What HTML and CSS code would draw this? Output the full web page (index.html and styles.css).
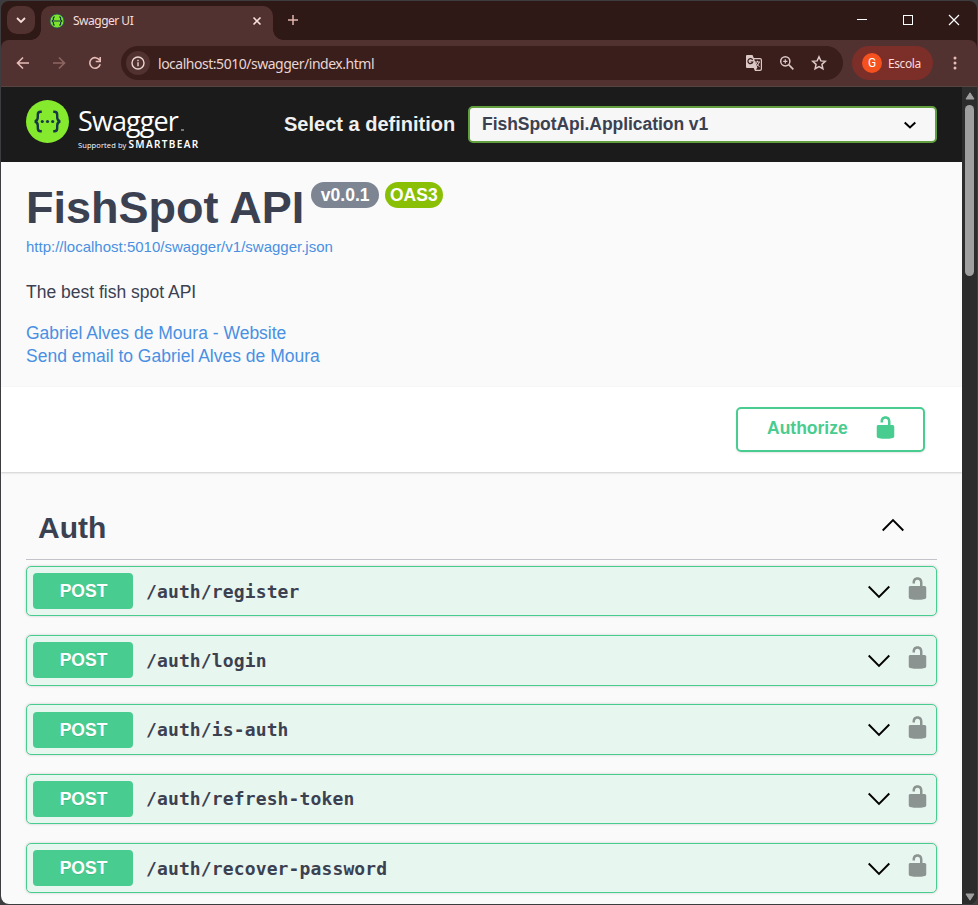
FILE: index.html
```html
<!DOCTYPE html>
<html lang="en">
<head>
<meta charset="utf-8">
<title>Swagger UI</title>
<link rel="stylesheet" href="styles.css">
</head>
<body>
<svg class="defs" width="0" height="0">
  <symbol id="unlock" viewBox="0 0 20 20"><path d="M15.8 8H14V5.6C14 2.703 12.665 1 10 1 7.334 1 6 2.703 6 5.6V6h2v-.801C8 3.754 8.797 3 10 3c1.203 0 2 .754 2 2.199V8H4c-.553 0-1 .646-1 1.199V17c0 .549.428 1.139.951 1.307l1.197.387C5.672 18.861 6.55 19 7.1 19h5.8c.549 0 1.428-.139 1.951-.307l1.196-.387c.524-.167.953-.757.953-1.306V9.199C17 8.646 16.352 8 15.8 8z"/></symbol>
  <symbol id="chev" viewBox="0 0 24 14"><path d="M1.7 1.5 12 11.9 22.3 1.5" fill="none" stroke="#000" stroke-width="1.9"/></symbol>
</svg>
<div class="window">
  <header class="tabs">
    <button class="tabsearch"><svg width="10" height="7"><path d="M1 1l4 4 4-4" fill="none" stroke="#f5dedb" stroke-width="1.8"/></svg></button>
    <div class="tab">
      <svg width="16" height="16" viewBox="0 0 16 16"><circle cx="8" cy="8" r="7.1" fill="#7ee52c" stroke="#284b50" stroke-width="1"/><path d="M6 4H5Q4.4 4 4.4 5v1.7L3.2 8l1.2 1.3V11q0 1 .6 1h1M10 4h1q.6 0 .6 1v1.7L12.8 8l-1.2 1.3V11q0 1-.6 1h-1M5 8h6" fill="none" stroke="#173647" stroke-width="1.2"/></svg>
      <span class="tabtitle">Swagger UI</span>
      <svg class="close" width="10" height="10"><path d="M1.5 1.5l7 7M8.500 1.500l-7 7" stroke="#f5dedb" stroke-width="1.6"/></svg>
    </div>
    <svg class="newtab" width="12" height="12"><path d="M6 1v10M1 6h10" stroke="#e3b5ae" stroke-width="1.5"/></svg>
    <div class="controls">
      <svg width="12" height="12"><path d="M1 5.500h10" stroke="#fff"/></svg>
      <svg width="12" height="12"><rect x="1.500" y="1.500" width="9" height="9" fill="none" stroke="#fff"/></svg>
      <svg width="12" height="12"><path d="M1 1l10 10M11 1L1 11" stroke="#fff" stroke-width="1.2"/></svg>
    </div>
  </header>
  <nav class="toolbar">
    <div class="navicons">
      <svg width="14" height="14"><path d="M13 7H2M7 1.500L1.500 7 7 12.500" fill="none" stroke="#e8bdb7" stroke-width="1.6"/></svg>
      <svg width="14" height="14"><path d="M1 7h11M7 1.500L12.500 7 7 12.500" fill="none" stroke="#8d6762" stroke-width="1.6"/></svg>
      <svg width="14" height="14"><path d="M11.600 4.200A5.300 5.300 0 1 0 12.200 8.300M12.200 1v4.500H7.700" fill="none" stroke="#e8bdb7" stroke-width="1.6"/></svg>
    </div>
    <div class="address">
      <span class="info"><svg width="14" height="14"><circle cx="7" cy="7" r="6" fill="none" stroke="#e9d5d2" stroke-width="1.4"/><path d="M7 6.200V10.200M7 3.700v1.500" stroke="#e9d5d2" stroke-width="1.4"/></svg></span>
      <span class="url">localhost:5010/swagger/index.html</span>
      <span class="actions">
        <svg width="18" height="18" viewBox="0 0 18 18"><path d="M2 1h5.500l1.300 3H15q2 0 2 2v9q0 2-2 2H10l-1.300-3H2q-1 0-1-1V2q0-1 1-1z" fill="#dcc8c6"/><path d="M9.200 5.200h5.800q.8 0 .8.8v9q0 .8-.8.8h-4l1.400-2.300z" fill="#3a1e1b"/><path d="M7.600 5.900A2.500 2.500 0 1 0 7.800 8H5.600" fill="none" stroke="#3a1e1b" stroke-width="1.200"/><path d="M10 8h5M12.500 6.700V8M11 8.500q1 2.800 3.700 4.300M14.300 8q-.8 3-3.300 4.800" fill="none" stroke="#dcc8c6"/></svg>
        <svg width="16" height="16"><circle cx="6.300" cy="6.300" r="4.600" fill="none" stroke="#dcc8c6" stroke-width="1.500"/><path d="M9.700 9.700l4.600 4.600" stroke="#dcc8c6" stroke-width="1.700"/><path d="M6.300 4.200v4.200M4.200 6.300h4.200" stroke="#dcc8c6" stroke-width="1.200"/></svg>
        <svg width="16" height="16"><path d="M8 1.800l1.850 4.100 4.450.45-3.350 3 .95 4.400L8 11.500l-3.900 2.250.95-4.400-3.350-3 4.450-.45z" fill="none" stroke="#dcc8c6" stroke-width="1.500"/></svg>
      </span>
    </div>
    <div class="profile"><span class="avatar">G</span><span class="name">Escola</span></div>
    <svg class="more" width="4" height="16" fill="#e8bdb7"><circle cx="2" cy="3" r="1.500"/><circle cx="2" cy="8" r="1.500"/><circle cx="2" cy="13" r="1.500"/></svg>
  </nav>
  <div class="view">
    <main class="page">
      <div class="topbar">
        <div class="logo">
          <svg width="43" height="43" viewBox="0 0 43 43"><circle cx="21.500" cy="21.500" r="21.500" fill="#85ea2d"/><path d="M15.800 11.700h-1.300q-2.700 0-2.700 3v2.600q0 3.500-3 4.200 3 .7 3 4.200v2.600q0 3 2.700 3h1.300M27.200 11.700h1.300q2.700 0 2.700 3v2.600q0 3.500 3 4.200-3 .7-3 4.200v2.600q0 3-2.700 3h-1.300" fill="none" stroke="#173647" stroke-width="2.400"/><g fill="#173647"><circle cx="16.300" cy="21.500" r="1.550"/><circle cx="21.500" cy="21.500" r="1.550"/><circle cx="26.700" cy="21.500" r="1.550"/></g></svg>
          <div class="words"><span class="brand">Swagger<i></i></span><span class="support">Supported by <b>SMARTBEAR</b></span></div>
        </div>
        <label class="deflabel">Select a definition</label>
        <div class="select"><span>FishSpotApi.Application v1</span><svg width="14" height="9"><path d="M1.700 1.500L7 6.500l5.300-5" fill="none" stroke="#000" stroke-width="2"/></svg></div>
      </div>
      <section class="about">
        <div class="titleline"><h1>FishSpot API</h1><span class="badge">v0.0.1</span><span class="badge oas">OAS3</span></div>
        <a class="json">http://localhost:5010/swagger/v1/swagger.json</a>
        <p>The best fish spot API</p>
        <a>Gabriel Alves de Moura - Website</a>
        <a>Send email to Gabriel Alves de Moura</a>
      </section>
      <section class="scheme"><button class="authorize"><span>Authorize</span><svg width="25" height="25"><use href="#unlock"/></svg></button></section>
      <section class="ops">
        <div class="tag"><h2>Auth</h2><svg class="up" width="24" height="14"><use href="#chev"/></svg></div>
        <div class="op"><span class="method">POST</span><span class="path">/auth/register</span><svg class="chev" width="24" height="14"><use href="#chev"/></svg><svg class="lock" width="25" height="25"><use href="#unlock"/></svg></div>
        <div class="op"><span class="method">POST</span><span class="path">/auth/login</span><svg class="chev" width="24" height="14"><use href="#chev"/></svg><svg class="lock" width="25" height="25"><use href="#unlock"/></svg></div>
        <div class="op"><span class="method">POST</span><span class="path">/auth/is-auth</span><svg class="chev" width="24" height="14"><use href="#chev"/></svg><svg class="lock" width="25" height="25"><use href="#unlock"/></svg></div>
        <div class="op"><span class="method">POST</span><span class="path">/auth/refresh-token</span><svg class="chev" width="24" height="14"><use href="#chev"/></svg><svg class="lock" width="25" height="25"><use href="#unlock"/></svg></div>
        <div class="op"><span class="method">POST</span><span class="path">/auth/recover-password</span><svg class="chev" width="24" height="14"><use href="#chev"/></svg><svg class="lock" width="25" height="25"><use href="#unlock"/></svg></div>
      </section>
    </main>
    <aside class="scroll">
      <svg width="10" height="8"><path d="M5 .8L9 7H1z" fill="#9f9f9f" stroke="#9f9f9f" stroke-linejoin="round"/></svg>
      <div class="thumb"></div>
      <svg class="down" width="10" height="8"><path d="M5 7.200L9 1H1z" fill="#9f9f9f" stroke="#9f9f9f" stroke-linejoin="round"/></svg>
    </aside>
  </div>
</div>
</body>
</html>
```
FILE: styles.css
```css
* { box-sizing: border-box; }
body { margin: 0; width: 978px; height: 905px; overflow: hidden; background: #3d3d3f; font-family: "Liberation Sans", Arial, sans-serif; color: #3b4151; }
svg { display: block; flex: none; }
.defs { position: absolute; }
button { padding: 0; border: 0; font: inherit; }
.window { margin: 1px 2px 1px 1px; width: 976px; height: 903px; border-radius: 8px; overflow: hidden; background: #2f1916; display: flex; flex-direction: column; }

.tabs { height: 39px; flex: none; display: flex; align-items: flex-start; padding: 5px 0 0 6px; color: #f5dedb; font-family: "Noto Sans", sans-serif; }
.tabsearch { width: 28px; height: 28px; border-radius: 10px; background: #523230; display: flex; align-items: center; justify-content: center; }
.tab { position: relative; width: 232px; height: 34px; margin-left: 6px; border-radius: 10px 10px 0 0; background: #523230; display: flex; align-items: center; padding: 0 11px 5px 8px; }
.tab::before, .tab::after { content: ""; position: absolute; bottom: 0; width: 10px; height: 10px; }
.tab::before { left: -10px; background: radial-gradient(circle at 0 0, transparent 9.5px, #523230 10px); }
.tab::after { right: -10px; background: radial-gradient(circle at 100% 0, transparent 9.5px, #523230 10px); }
.tabtitle { flex: 1; margin-left: 8px; font-size: 12px; letter-spacing: -.5px; }
.newtab { margin: 8px 0 0 14px; }
.controls { margin-left: auto; display: flex; gap: 34px; padding: 8px 17px 0 0; }

.toolbar { height: 46px; flex: none; display: flex; align-items: center; background: #523230; padding: 0 20px 0 15px; border-radius: 8px 8px 0 0; font-family: "Noto Sans", sans-serif; }
.navicons { display: flex; gap: 22px; margin-right: 19px; }
.address { width: 722px; height: 34px; border-radius: 17px; background: #3a1e1b; display: flex; align-items: center; padding: 0 16px 0 5px; }
.info { width: 24px; height: 24px; border-radius: 50%; background: #523230; display: flex; align-items: center; justify-content: center; }
.url { margin-left: 8px; font-size: 14px; letter-spacing: -.48px; color: #e9d5d2; }
.actions { margin-left: auto; display: flex; align-items: center; gap: 16px; }
.profile { width: 81px; height: 34px; border-radius: 17px; margin-left: 9px; background: #7c2e29; display: flex; align-items: center; padding-left: 10px; color: #ffdad5; font-size: 12px; }
.avatar { width: 20px; height: 20px; border-radius: 50%; background: #f4511e; color: #fff; display: flex; align-items: center; justify-content: center; font: 12px Roboto, sans-serif; }
.name { margin-left: 6px; letter-spacing: -.4px; }
.more { margin-left: auto; }

.view { flex: 1; min-height: 0; display: flex; border-top: 1px solid #554440; }
.page { width: 961px; background: #fafafa; overflow: hidden; }
.topbar { height: 75px; background: #1b1b1b; display: flex; align-items: center; padding: 0 25px; }
.logo { display: flex; width: 258px; align-items: flex-start; height: 49px; }
.words { margin-left: 9px; display: flex; flex-direction: column; color: #fff; font-family: "Open Sans", sans-serif; white-space: nowrap; }
.brand { font-size: 27px; line-height: 32px; height: 38px; padding-top: 5px; letter-spacing: -.9px; }
.brand i { display: inline-block; width: 3px; height: 2px; margin-left: 3px; background: #777; }
.support { font-size: 7.5px; line-height: 12px; letter-spacing: .1px; }
.support b { font-family: "Noto Sans", sans-serif; font-weight: 600; font-size: 10px; letter-spacing: 1.35px; }
.deflabel { color: #f0f0f0; font-size: 20px; font-weight: 700; white-space: nowrap; }
.select { margin-left: auto; width: 469px; height: 37px; border: 2px solid #62a03f; border-radius: 5px; background: #f7f7f7; display: flex; align-items: center; justify-content: space-between; padding: 0 18px 0 12px; font-size: 17.5px; font-weight: 700; }
.select span { letter-spacing: -.05px; }
.select svg { margin-top: 1px; }

.about { height: 225px; padding: 20px 25px 0; }
.titleline { display: flex; align-items: flex-start; height: 56px; }
h1 { margin: 0; font-size: 45px; line-height: 51px; }
.badge { height: 26px; line-height: 26px; border-radius: 13px; margin-left: 7px; padding: 0 9.5px; background: #7d8492; color: #fff; font-size: 17.5px; font-weight: 700; }
.oas { background: #89bf04; margin-left: 6px; padding: 0 5px; }
.about a { display: block; color: #4990e2; font-size: 17.5px; line-height: 23px; }
.about .json { font-size: 15px; line-height: 18px; }
.about p { margin: 26px 0 19px; font-size: 17.5px; line-height: 21px; }

.scheme { height: 85px; background: #fff; box-shadow: 0 1px 2px rgba(0,0,0,.18); display: flex; justify-content: flex-end; padding: 20px 37px 0 0; }
.authorize { width: 189px; height: 45px; border: 2px solid #49cc90; border-radius: 5px; background: #fff; box-shadow: 0 1px 2px rgba(0,0,0,.1); color: #49cc90; fill: #49cc90; font-size: 17.5px; font-weight: 700; display: flex; align-items: center; justify-content: space-between; padding: 0 25px 3px 29px; }
.authorize svg { margin-top: -1px; }

.ops { padding: 37px 25px 0; }
.tag { height: 51px; border-bottom: 1px solid #c2c4c9; display: flex; justify-content: space-between; padding: 0 32.5px 0 12px; margin-bottom: 5.75px; }
h2 { margin: 1px 0 0; font-size: 30px; line-height: 36px; }
.up { transform: rotate(180deg); margin-top: 9px; }
.op { height: 50.5px; margin-bottom: 18.75px; border: 1px solid #49cc90; border-radius: 5px; background: #e8f6f0; box-shadow: 0 0 3px rgba(0,0,0,.19); display: flex; align-items: center; padding: 0 6px; }
.method { width: 100px; height: 36px; line-height: 36px; padding-left: 1px; border-radius: 4px; background: #49cc90; color: #fff; font-size: 17.5px; font-weight: 700; text-align: center; text-shadow: 0 1px 0 rgba(0,0,0,.1); }
.path { margin-left: 13px; font: 700 18px "DejaVu Sans Mono", monospace; letter-spacing: .13px; }
.chev { margin-left: auto; margin-top: 1px; }
.lock { fill: #8b9490; margin: 0 0 5px 14px; }

.scroll { width: 15px; background: #2c2c2c; display: flex; flex-direction: column; align-items: center; padding: 5px 0 3px; }
.thumb { width: 9px; height: 171px; border-radius: 5px; background: #9f9f9f; margin-top: 5px; }
.down { margin-top: auto; }
```
